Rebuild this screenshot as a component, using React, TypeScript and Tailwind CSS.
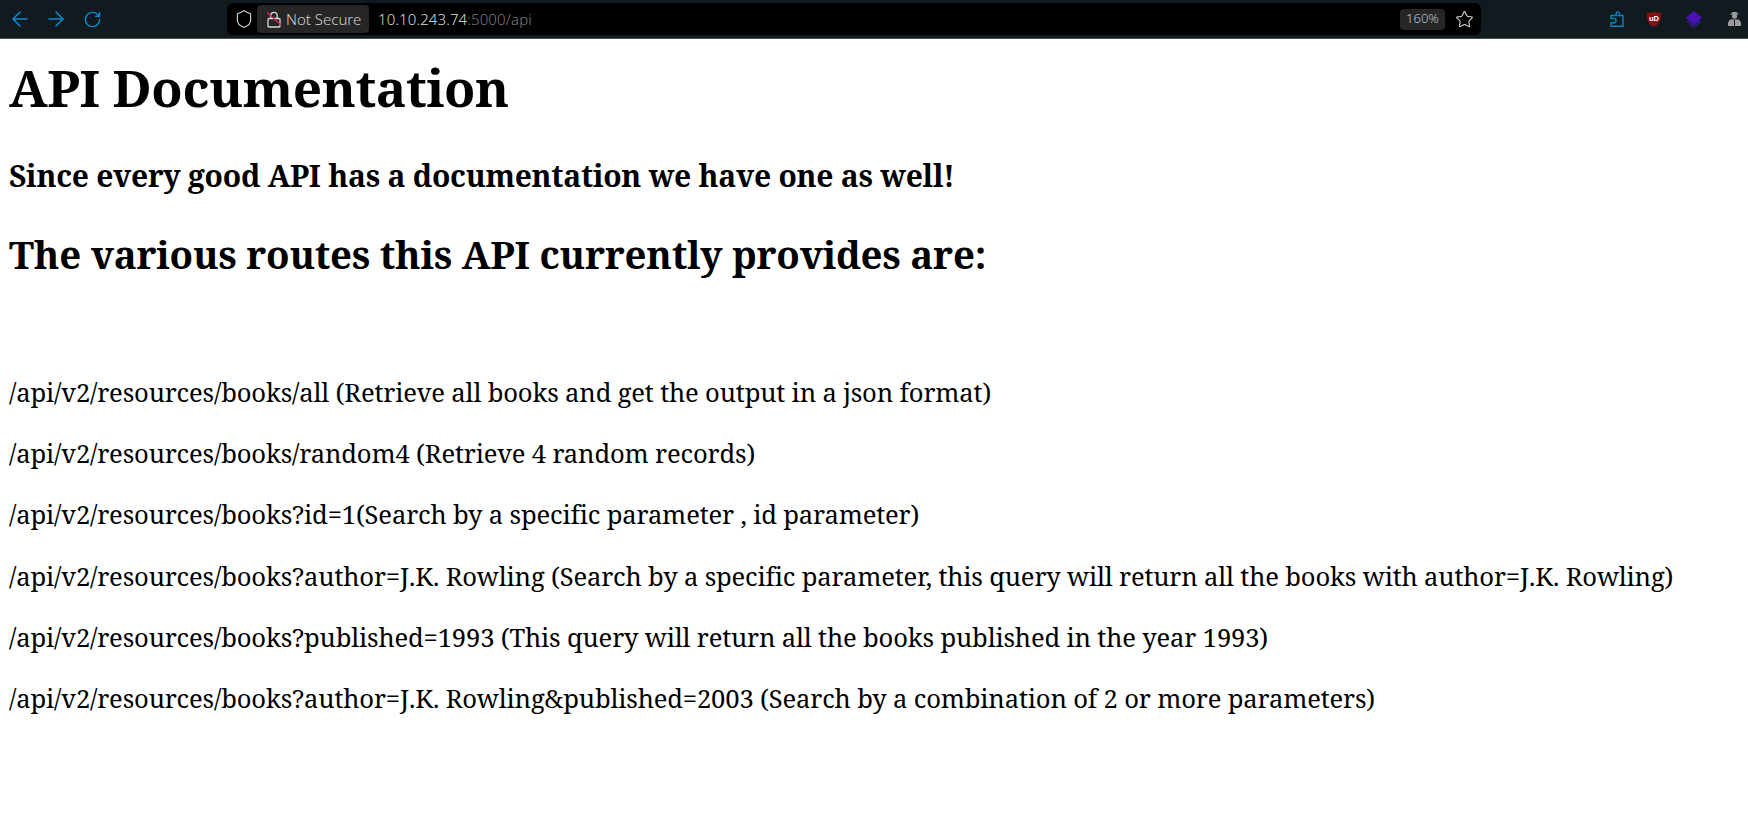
import { ArrowLeft, ArrowRight, RotateCw, Shield, Star } from 'lucide-react';

const routes = [
  '/api/v2/resources/books/all (Retrieve all books and get the output in a json format)',
  '/api/v2/resources/books/random4 (Retrieve 4 random records)',
  '/api/v2/resources/books?id=1(Search by a specific parameter , id parameter)',
  '/api/v2/resources/books?author=J.K. Rowling (Search by a specific parameter, this query will return all the books with author=J.K. Rowling)',
  '/api/v2/resources/books?published=1993 (This query will return all the books published in the year 1993)',
  '/api/v2/resources/books?author=J.K. Rowling&published=2003 (Search by a combination of 2 or more parameters)',
];

function Extensions() {
  return (
    <div className="flex items-center ml-[129px]">
      {/* puzzle */}
      <svg width="14" height="16" viewBox="0 0 14 16" fill="none">
        <path
          d="M5.500 4.500H6.600C5.600 3.200 6 1 7.800 1c1.800 0 2.200 2.200 1.200 3.500h4v10.700H1v-3.400h3.200c1.400 0 1.900-1.400 1.900-2.200 0-.9-.6-2.200-1.900-2.200H1V4.500h4.500z"
          stroke="#0a84c8"
          strokeWidth="1.400"
        />
      </svg>
      {/* ublock */}
      <svg width="14" height="16" viewBox="0 0 14 16" className="ml-[23px]">
        <path d="M7 0.500C9 1.600 11.500 2 14 2c0 6-.5 10.800-7 14C.5 12.800 0 8 0 2c2.500 0 5-.4 7-1.500z" fill="#8a0f14" />
        <text x="7" y="9.500" textAnchor="middle" fontSize="7.500" fontWeight="700" fill="#ffffff" fontFamily="Liberation Sans, sans-serif">
          uD
        </text>
      </svg>
      {/* stacked diamond */}
      <svg width="16" height="17" viewBox="0 0 16 17" className="ml-[25px]">
        <path d="M8 5L16 11 8 17 0 11z" fill="#2a1a73" />
        <path d="M8 0L16 6.500 8 13 0 6.500z" fill="#4b12b8" />
      </svg>
      {/* account figure */}
      <svg width="13" height="14" viewBox="0 0 13 14" className="ml-[26px]" fill="#9c9c9c">
        <rect x="4" y="0" width="5" height="2" rx="0.500" />
        <rect x="2.500" y="1.500" width="8" height="1.200" />
        <circle cx="6.500" cy="4.300" r="2.500" />
        <path d="M2 7.500h9l2 3V14H0v-3.500z" />
        <path d="M6 8h1v6H6z" fill="#101a1f" />
      </svg>
    </div>
  );
}

function Toolbar() {
  return (
    <div className="h-[39px] bg-[#101a1f] border-b border-[#4a4f52] flex items-center font-['Noto_Sans',sans-serif]">
      <div className="flex items-center pl-[2px] w-[227px] text-[#0b8bcf]">
        <div className="w-[36px] flex justify-center">
          <ArrowLeft size={24} strokeWidth={1.500} />
        </div>
        <div className="w-[36px] flex justify-center">
          <ArrowRight size={24} strokeWidth={1.500} />
        </div>
        <div className="w-[36px] flex justify-center">
          <RotateCw size={19} strokeWidth={1.800} />
        </div>
      </div>
      <div className="w-[1254px] h-[32px] bg-black rounded-md flex items-center">
        <Shield size={20} strokeWidth={1.300} className="ml-[7px] text-[#dcdcdc]" />
        <div className="ml-[3px] h-[28px] w-[112px] bg-[#262626] rounded flex items-center pl-[9px] text-[15px] text-[#d0d0d0] font-light whitespace-nowrap">
          <svg width="16" height="17" viewBox="0 0 16 17" fill="none" className="mr-[4px] shrink-0">
            <rect x="2" y="7.500" width="12" height="8.500" rx="1" stroke="#d8d8d8" strokeWidth="1.300" />
            <path d="M4.800 7.500V4.500a3.200 3.200 0 0 1 6.400 0v3" stroke="#d8d8d8" strokeWidth="1.300" />
            <path d="M1 1.500l14 12.500" stroke="#d0245e" strokeWidth="1.300" />
          </svg>
          Not Secure
        </div>
        <div className="ml-[9px] text-[15px] text-[#dedede] font-light whitespace-nowrap tracking-[0.1px]">
          10.10.243.74<span className="text-[#7c7c7c]">:5000/api</span>
        </div>
        <div className="ml-auto mr-[-1px] h-[21px] w-[45px] bg-[#262626] rounded flex items-center justify-center text-[13px] font-light text-[#b8c4cc]">
          160%
        </div>
        <Star size={19} strokeWidth={1.300} className="ml-[11px] mr-[7px] text-[#e0e0e0]" />
      </div>
      <Extensions />
    </div>
  );
}

export default function App() {
  return (
    <div className="min-h-screen bg-white text-black font-['Noto_Serif','DejaVu_Serif',serif]">
      <Toolbar />
      <div className="px-[9px]">
        <h1 className="text-[51.2px] font-bold leading-[70px] pt-[13px] tracking-[-0.39px]">API Documentation</h1>
        <h3 className="text-[30px] font-bold leading-[41px] mt-[33px] tracking-[-0.255px]">Since every good API has a documentation we have one as well!</h3>
        <h2 className="text-[38.4px] font-bold leading-[52px] mt-[32px] tracking-[-0.24px]">The various routes this API currently provides are:</h2>
        <div className="mt-[95px] flex flex-col gap-[26.200px] text-[25.6px] leading-[35px] tracking-[-0.165px]">
          {routes.map((r) => (
            <p key={r}>{r}</p>
          ))}
        </div>
      </div>
    </div>
  );
}
